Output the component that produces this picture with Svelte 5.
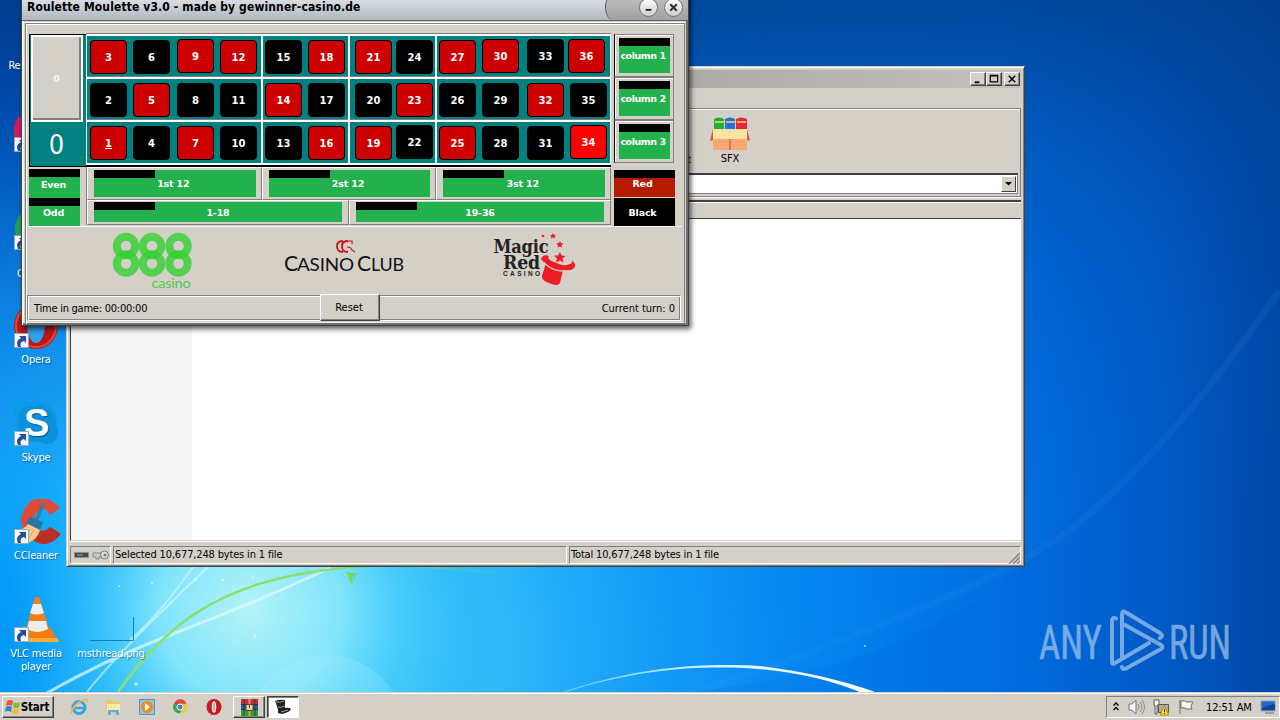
<script>
  // Board rows, top to bottom
  const rows = [
    [3, 6, 9, 12, 15, 18, 21, 24, 27, 30, 33, 36],
    [2, 5, 8, 11, 14, 17, 20, 23, 26, 29, 32, 35],
    [1, 4, 7, 10, 13, 16, 19, 22, 25, 28, 31, 34]
  ];
  const reds = [1, 3, 5, 7, 9, 12, 14, 16, 18, 19, 21, 23, 25, 27, 30, 32, 34, 36];
  const raised = [9, 22, 30, 33, 36, 34];

  const icons = [
    { kind: 'bin', label: 'Recycle Bin', top: 9 },
    { kind: 'reader', label: '', top: 107 },
    { kind: 'chrome', label: 'Chrome', top: 205, lower: true },
    { kind: 'opera', label: 'Opera', top: 303 },
    { kind: 'skype', label: 'Skype', top: 401 },
    { kind: 'ccleaner', label: 'CCleaner', top: 499 },
    { kind: 'vlc', label: 'VLC media player', top: 597 }
  ];

  let selected = $state(34);
</script>

<div class="desktop">
  <svg class="wallpaper" viewBox="0 0 1280 720" preserveAspectRatio="none">
    <defs>
      <linearGradient id="sky" x1="0" y1="0" x2="0" y2="1">
        <stop offset="0" stop-color="#0040a8" />
        <stop offset=".22" stop-color="#0050bc" />
        <stop offset=".5" stop-color="#0786e2" />
        <stop offset=".8" stop-color="#00a2fa" />
        <stop offset="1" stop-color="#0098f4" />
      </linearGradient>
      <linearGradient id="right" x1="0" y1="0" x2="1" y2="0">
        <stop offset=".3" stop-color="#0078ea" stop-opacity="0" />
        <stop offset=".52" stop-color="#0080ee" stop-opacity=".75" />
        <stop offset=".78" stop-color="#0070e4" />
        <stop offset=".9" stop-color="#005cc8" />
        <stop offset="1" stop-color="#0046a0" />
      </linearGradient>
      <linearGradient id="topdark" x1="0" y1="0" x2="0" y2="1">
        <stop offset="0" stop-color="#003c88" stop-opacity=".75" />
        <stop offset=".5" stop-color="#0048a4" stop-opacity=".25" />
        <stop offset="1" stop-color="#0060d0" stop-opacity="0" />
      </linearGradient>
      <radialGradient id="halo" gradientUnits="userSpaceOnUse" cx="300" cy="660" r="680">
        <stop offset="0" stop-color="#50d4fa" />
        <stop offset=".3" stop-color="#38c0fa" stop-opacity=".85" />
        <stop offset=".55" stop-color="#20a8fc" stop-opacity=".55" />
        <stop offset=".8" stop-color="#0c90f8" stop-opacity=".25" />
        <stop offset="1" stop-color="#0080f0" stop-opacity="0" />
      </radialGradient>
      <radialGradient id="glow" gradientUnits="userSpaceOnUse" cx="250" cy="610" r="260">
        <stop offset="0" stop-color="#b4f4f8" />
        <stop offset=".35" stop-color="#88e8fb" stop-opacity=".9" />
        <stop offset=".6" stop-color="#4cd0fc" stop-opacity=".5" />
        <stop offset="1" stop-color="#10a0f8" stop-opacity="0" />
      </radialGradient>
      <radialGradient id="edge" gradientUnits="userSpaceOnUse" cx="-40" cy="640" r="230">
        <stop offset="0" stop-color="#0094f6" />
        <stop offset=".3" stop-color="#0098f8" stop-opacity=".9" />
        <stop offset="1" stop-color="#00a8ff" stop-opacity="0" />
      </radialGradient>
      <linearGradient id="swoosh" x1="0" x2="1">
        <stop offset="0" stop-color="#9ce4ff" stop-opacity=".6" />
        <stop offset=".5" stop-color="#d8f6ff" />
        <stop offset="1" stop-color="#fff" />
      </linearGradient>
      <linearGradient id="stem" x1="0" x2="1">
        <stop offset="0" stop-color="#8be070" />
        <stop offset=".55" stop-color="#8bdc68" />
        <stop offset="1" stop-color="#60c8b0" stop-opacity="0" />
      </linearGradient>
    </defs>
    <rect width="1280" height="720" fill="url(#sky)" />
    <rect width="1280" height="720" fill="url(#right)" />
    <rect width="1280" height="500" fill="url(#topdark)" />
    <rect width="1280" height="720" fill="url(#halo)" />
    <rect width="1280" height="720" fill="url(#edge)" />
    <rect width="1280" height="720" fill="url(#glow)" />
    <circle cx="326" cy="735" r="80" fill="#c0f6ff" opacity=".2" />
    <path d="M690 692Q900 670 1025 565L1280 310V720H690Z" fill="#005ed0" opacity=".12" />
    <path d="M690 694Q850 640 940 600T1070 530Q1170 450 1280 290" fill="none" stroke="#4aa0f0" stroke-width="7" opacity=".1" />
    <path d="M560 693C650 662 720 664 760 666Q826 674 878 693H862Q812 672 745 668C700 666 640 668 562 693Z" fill="url(#swoosh)" />
    <path d="M45 694Q105 660 170 635Q250 605 330 568" fill="none" stroke="#d8faff" stroke-width="3" opacity=".75" />
    <path d="M87 692Q120 650 208 567M130 640Q160 614 193 567" fill="none" stroke="#d8faff" stroke-width="2" opacity=".6" />
    <path d="M118 692C165 626 215 588 306 573S440 570 520 574" fill="none" stroke="url(#stem)" stroke-width="2.4" />
    <path d="M345 571q5 2 14 3l-5 1 3 5-5-4 1 7-3 0-2-8z" fill="#78d860" />
    <g fill="#d8fbff" opacity=".75">
      <circle cx="136" cy="684" r="1.8" /><circle cx="223" cy="580" r="1.3" />
      <circle cx="119" cy="586" r="1" /><circle cx="152" cy="583" r="1" />
      <circle cx="255" cy="636" r="1.6" /><circle cx="196" cy="580" r="1.4" />
      <circle cx="253" cy="577" r="1" /><circle cx="865" cy="646" r="1" />
    </g>
  </svg>

  {#each icons as icon}
    <div class="desk-icon" class:lower={icon.lower} style="top: {icon.top}px">
      <svg width="48" height="48" viewBox="0 0 48 48">
        {#if icon.kind === 'bin'}
          <path d="M12 6h26l-4 38H16z" fill="#9ec4dc" opacity=".6" />
        {:else if icon.kind === 'reader'}
          <rect x="2" y="7" width="42" height="38" rx="14" fill="#d2185c" />
        {:else if icon.kind === 'chrome'}
          <circle cx="25" cy="24" r="22" fill="#20a052" />
        {:else if icon.kind === 'opera'}
          <ellipse cx="24" cy="23" rx="22" ry="23" fill="#bc1717" />
          <ellipse cx="24" cy="23" rx="20" ry="21" fill="none" stroke="#e5473b" stroke-width="2" />
          <ellipse cx="24" cy="22" rx="9" ry="18" fill="#2aa1ea" />
        {:else if icon.kind === 'skype'}
          <path d="M13 0C1 0-1 12 4 19C1 32 14 44 27 40C40 46 49 34 44 23C48 8 33-1 22 3Q18 0 13 0z" fill="#079ce4" />
          <path d="M6 15Q12 1 30 5Q43 10 44 23Q49 37 40 42Q32 45 27 40Q12 42 6 30z" fill="#0a90dc" />
          <text x="24.500" y="35" text-anchor="middle" font-family="Liberation Sans" font-size="38" font-weight="bold" fill="#fff">S</text>
        {:else if icon.kind === 'ccleaner'}
          <path d="M48 9Q31-9 16 5Q2 22 17 38Q32 53 49 35L38 28Q30 36 24 27Q18 13 31 10Q35 10 38 16z" fill="#e24935" />
          <path d="M49 35Q35 52 20 40L26 30Q31 35 38 28z" fill="#b82f27" />
          <path d="M30 3l3 1-8 21-4-1z" fill="#397bab" />
          <path d="M18 18l13 5-3 8-14-7z" fill="#2478a5" />
          <path d="M16 25l12 6Q26 40 16 44L2 31Q11 32 16 25z" fill="#f4c98d" />
          <path d="M13 28l-6 6M18 30l-5 10M22 31l-5 8" stroke="#d8a868" />
        {:else if icon.kind === 'vlc'}
          <path d="M13 31h26l7 14H8z" fill="#f47a12" />
          <path d="M23 0h4L37 32Q26 40 14 32z" fill="#f77d1a" />
          <path d="M21 7h8l3 9q-7 3-14 0zM17 24h17l2 8q-11 6-21 0z" fill="#eee" />
          <path d="M9 41h36l2 4H7z" fill="#ffac32" />
        {/if}
      </svg>
      {#if icon.kind !== 'bin'}
        <svg class="shortcut" viewBox="0 0 15 15">
          <path d="M.5.5h14v14H.5z" fill="#f4f6fa" stroke="#9ab" />
          <path d="M4 14Q1 8 7 5L5 3h7v7l-2-2Q5 9 7 14z" fill="#214f9a" />
        </svg>
      {/if}
      <span>{icon.label}</span>
    </div>
  {/each}

  <div class="desk-file">
    <svg width="48" height="26" viewBox="0 0 48 26"><path d="M3 24.500h43.500V1" fill="none" stroke="#187eb0" /></svg>
    <span>msthread.png</span>
  </div>

  <!-- Archive manager behind the game -->
  <div class="archive">
    <div class="archive-title">
      <button class="cap"><svg viewBox="0 0 13 11"><path d="M3 9h5" stroke="#000" stroke-width="2" /></svg></button>
      <button class="cap"><svg viewBox="0 0 13 11"><path d="M2.500 1.500h8v7h-8zM2 2h9" fill="none" stroke="#000" stroke-width="1.300" /></svg></button>
      <button class="cap close"><svg viewBox="0 0 13 11"><path d="M3 2l7 7M10 2l-7 7" stroke="#000" stroke-width="1.600" /></svg></button>
    </div>
    <div class="archive-menu"></div>
    <div class="archive-tools">
      <div class="tool-row">
        <span class="tool-cut">Protect</span>
        <div class="tool">
          <svg width="40" height="34" viewBox="0 0 40 34">
            <path d="M4 2Q9-1 14 2v12H4z" fill="#1fae36" /><path d="M15 2Q20-1 25 2v12H15z" fill="#2a6fe0" /><path d="M26 2Q31-1 37 2v12H26z" fill="#e8283a" />
            <path d="M5 5h9M16 5h9M27 5h9" stroke="#f4e05a" stroke-width="1.600" />
            <path d="M3 13h34v20H3z" fill="#f6a873" />
            <path d="M3 12h34l2 10H1z" fill="#fbe3a2" />
            <path d="M3 12L0 24l3-1M37 12l3 12-3-1" fill="#b5633d" /><path d="M20 22v11" stroke="#a35330" />
          </svg>
          <span>SFX</span>
        </div>
      </div>
      <div class="address"><button class="drop"><svg viewBox="0 0 8 4"><path d="M0 0h8L4 4z" /></svg></button></div>
    </div>
    <div class="list-head"></div>
    <div class="list"><div class="tree"></div></div>
    <div class="archive-status">
      <div class="stat marks">
        <svg width="36" height="12" viewBox="0 0 36 12">
          <path d="M.5 3.500h14v5H.5z" fill="#45494c" stroke="#8b9093" /><path d="M3 6h6" stroke="#8ab5a5" />
          <path d="M19 4h9v4h-3v2h-3V8h-3z" fill="#c9c9c9" stroke="#888" /><circle cx="30.500" cy="6" r="4" fill="#ddd" stroke="#777" /><circle cx="31" cy="6" r="1.500" fill="#777" />
        </svg>
      </div>
      <div class="stat">Selected 10,677,248 bytes in 1 file</div>
      <div class="stat last">Total 10,677,248 bytes in 1 file
        <svg class="grip" viewBox="0 0 12 12"><path d="M1 12L12 1M5 12l7-7M9 12l3-3" stroke="#808080" stroke-width="1.400" /></svg>
      </div>
    </div>
  </div>

  <!-- Game window -->
  <div class="game">
    <div class="game-title">
      <span>Roulette Moulette v3.0 - made by gewinner-casino.de</span>
      <div class="game-caps">
        <button><svg viewBox="0 0 18 18"><path d="M6 11.500h6" stroke="#222" stroke-width="2" /></svg></button>
        <button><svg viewBox="0 0 18 18"><path d="M5.500 5.500l7 7M12.500 5.500l-7 7" stroke="#333" stroke-width="2.200" /></svg></button>
      </div>
    </div>
    <div class="client">
      <div class="table">
        <div class="zero">
          <button>0</button>
          <strong>0</strong>
        </div>
        <div class="board">
          {#each rows as row}
            <div class="row">
              {#each row as n}
                <button
                  class="chip"
                  class:red={reds.includes(n)}
                  class:up={raised.includes(n)}
                  class:back={n === 36}
                  class:hot={n === selected}
                  class:lined={n === 1}
                  onclick={() => (selected = n)}>{n}</button>
              {/each}
            </div>
          {/each}
        </div>
        <div class="columns">
          {#each [1, 2, 3] as c}
            <div class="column-cell"><button class="bet">column {c}</button></div>
          {/each}
        </div>
        <div class="parity">
          <button class="bet">Even</button>
          <button class="bet">Odd</button>
        </div>
        <div class="outside">
          <div class="dozens">
            {#each [1, 2, 3] as d}
              <div><button class="bet">{d}st 12</button></div>
            {/each}
          </div>
          <div class="halves">
            <div><button class="bet">1-18</button></div>
            <div><button class="bet">19-36</button></div>
          </div>
        </div>
        <div class="colours">
          <button class="bet crimson">Red</button>
          <button class="bet black">Black</button>
        </div>
      </div>
      <div class="logos">
        <svg width="656" height="66" viewBox="28 227 656 66">
          <g fill="none" stroke="#30d030" stroke-opacity=".78" stroke-width="8">
            {#each [126, 152, 178.500] as x}
              <circle cx={x} cy="246" r="9.200" /><circle cx={x} cy="263.500" r="9.200" />
            {/each}
          </g>
          <text x="151.500" y="287.500" font-family="Lato" font-size="13" fill="#50c850" textLength="39" lengthAdjust="spacingAndGlyphs">casino</text>
          <g fill="none" stroke="#c5161d">
            <path d="M343 241q-6 0-6 5.500t6 5.500M348 241q-6 0-6 5.500t6 5.500" stroke-width="1.800" />
            <path d="M345 241h7v3M347 247q4 0 5 3l3 2" stroke-width="1.200" />
          </g>
          <g font-family="Lato" fill="#111">
            <text x="284" y="271" font-size="22" textLength="14" lengthAdjust="spacingAndGlyphs">C</text>
            <text x="297" y="271" font-size="18" textLength="57" lengthAdjust="spacingAndGlyphs">ASINO</text>
            <text x="357" y="271" font-size="22" textLength="14" lengthAdjust="spacingAndGlyphs">C</text>
            <text x="371" y="271" font-size="18" textLength="33" lengthAdjust="spacingAndGlyphs">LUB</text>
          </g>
          <g font-family="DejaVu Serif" font-weight="bold" fill="#222">
            <text x="493.500" y="253" font-size="18" textLength="55" lengthAdjust="spacingAndGlyphs">Magic</text>
            <text x="503" y="268.500" font-size="18" textLength="37" lengthAdjust="spacingAndGlyphs">Red</text>
          </g>
          <text x="503" y="275.500" font-family="Liberation Sans" font-size="6.500" font-weight="bold" fill="#222" textLength="37">CASINO</text>
          <g fill="#ee1c25">
            <path d="M542 257q2-3 7-1q-3 3 5 6q10 5 16 2q3-1 2-4q6 6 1 9q-3 2-10 1l-3 13q-2 4-11 0q-8-3-7-7l4-13q-7-3-4-6z" />
            <path d="M560 252l1.500 3.500 4 .5-3 2.500 1 4-3.500-2-4 2 1-4-3-3h4z" />
            <path d="M560 241l1 2 2.500.5-2 1.500.5 2.500-2-1-2.500 1 .5-2.500-2-1.500 3-.500zM553 233l1 2h2l-1.500 1.500.5 2-2-1-2 1 .5-2-1.500-1.500h2z" />
            <circle cx="543" cy="236" r="1.300" /><circle cx="536.500" cy="240.500" r=".8" />
          </g>
          <path d="M545 264q10 8 20 7" fill="none" stroke="#d4d0c8" stroke-width="1.300" />
        </svg>
      </div>
      <div class="game-status">
        <span class="timer">Time in game: 00:00:00</span>
        <button class="reset">Reset</button>
        <span class="turn">Current turn: 0</span>
      </div>
    </div>
  </div>

  <svg class="watermark" width="200" height="72" viewBox="0 0 200 72">
    <g font-family="Roboto" font-size="49" fill="#a8c8ec" stroke="#a8c8ec" stroke-width=".6">
      <text transform="translate(1 50) scale(.66 1)" textLength="95" lengthAdjust="spacingAndGlyphs">ANY</text>
      <text transform="translate(131 50) scale(.66 1)" textLength="94" lengthAdjust="spacingAndGlyphs">RUN</text>
    </g>
    <g fill="none" stroke="#a8c8ec" stroke-width="4" stroke-linejoin="round" stroke-linecap="round">
      <path d="M78 9.500Q74 8 74 12V53Q74 56 77 54L111 34" />
      <path d="M84 48V5Q84 1 88 3.500L122 24Q126 27 122 29" />
      <path d="M87 16L123 36Q126 38 123 40L88 59.500Q84 61 84 58" />
    </g>
  </svg>

  <div class="taskbar">
    <button class="start">
      <svg width="16" height="16" viewBox="0 0 16 16"><path d="M2 2q3-2 6 0L7 7Q4 5 1 7z" fill="#ed562b" /><path d="M9 3q3 2 6 0l-1 5q-3 2-6 0z" fill="#76b944" /><path d="M1 8q3-2 6 0l-1 5q-3-2-6 0z" fill="#3189cb" /><path d="M8 9q3 2 6 0l-1 5q-3 2-6 0z" fill="#f7bd28" /></svg>
      Start
    </button>
    <div class="quick">
      <svg viewBox="0 0 18 18"><circle cx="9" cy="9.500" r="6" fill="none" stroke="#36a5e2" stroke-width="3" /><path d="M5 10h9" stroke="#36a5e2" stroke-width="2.500" /><path d="M1 16Q2 8 11 3q8-4 6 2" fill="none" stroke="#e6bd38" stroke-width="1.500" /></svg>
      <svg viewBox="0 0 18 18"><path d="M2 2h6l1 2h7v11H2z" fill="#eacb69" /><path d="M3 6h13v8H3z" fill="#f9e9a9" /><path d="M4 17v-5h11v5h-3v-3H7v3z" fill="#5daed8" /></svg>
      <svg viewBox="0 0 18 18"><path d="M1.500 1.500h15v15h-15z" fill="#8fc5e5" stroke="#5292bd" /><circle cx="9" cy="9" r="6" fill="#f18a18" /><path d="M7 5l5 4-5 4z" fill="#fff" /></svg>
      <svg viewBox="0 0 18 18"><path d="M3 6A6.500 6.500 0 0 1 15.500 6L9 9z" fill="#df4638" /><path d="M3 5.500A6.500 6.500 0 0 0 9 15.500l3-6-4-1z" fill="#37a853" /><path d="M15.500 6A6.500 6.500 0 0 1 9 15.500l3-7-2-3z" fill="#f5c431" /><circle cx="9" cy="9" r="3" fill="#3e80dd" stroke="#fff" /></svg>
      <svg viewBox="0 0 18 18"><ellipse cx="9" cy="9" rx="7.500" ry="8" fill="#c51a21" /><ellipse cx="9" cy="9" rx="2.300" ry="6" fill="#f2e8e4" /><path d="M9 5v8" stroke="#a01018" stroke-width=".6" /></svg>
    </div>
    <button class="task">
      <svg width="17" height="17" viewBox="0 0 17 17"><path d="M0 0h17v5H0z" fill="#c52c44" /><path d="M0 6h17v4H0z" fill="#3651b4" /><path d="M0 11h17v6H0z" fill="#339a3c" /><path d="M0 5.500h17M0 10.500h17" stroke="#332" /><path d="M3 0v17M14 0v17" stroke="#332" stroke-width=".8" /><path d="M7.500 0h2v17h-2z" fill="#cfa54d" /><path d="M5 5.500h7v6H5z" fill="#e8d8a0" stroke="#543" /><path d="M8.500 6v3" stroke="#543" /></svg>
    </button>
    <button class="task active">
      <svg width="18" height="16" viewBox="0 0 18 16"><path d="M1 2Q6 0 11 1l0 8q4-1 6 1-1 3-9 5l-4-1 0-3Q3 6 1 2z" fill="#202024" /><path d="M4 8q3 1 7-1M2 3q4 1 8-1M7 13l7-2" fill="none" stroke="#bbb" stroke-width=".8" /></svg>
    </button>
    <div class="tray">
      <svg width="8" height="12" viewBox="0 0 8 12"><path d="M1.500 4.500l2.500-2.500 2.500 2.500M1.500 9L4 6.500 6.500 9" fill="none" stroke="#000" stroke-width="1.300" /></svg>
      <svg width="17" height="16" viewBox="0 0 17 16"><path d="M1 5h3l4-4v14l-4-4H1z" fill="#f4f4f4" stroke="#777" /><path d="M10 5q2 3 0 6M12 3q4 5 0 10M14 1q5 7 0 14" fill="none" stroke="#888" /></svg>
      <svg width="17" height="17" viewBox="0 0 17 17"><path d="M5.500 5.500h10v8h-10z" fill="#aaa" stroke="#555" /><path d="M1 1h5v5H4v9H2V6H1z" fill="#fff" stroke="#555" /><path d="M11 7l5 9H7z" fill="#ffdb23" stroke="#b88a12" /><path d="M11.500 10v3M11.500 14v1" stroke="#332" /></svg>
      <svg width="17" height="16" viewBox="0 0 17 16"><path d="M2 1v14M3 2q4-1 6 1h6l-2 4 1 3H9Q6 8 3 9z" fill="#f8f8f8" stroke="#666" /></svg>
      <span>12:51 AM</span>
      <svg width="16" height="14" viewBox="0 0 16 14"><path d="M1 1h14v10H1z" fill="#2767c4" stroke="#8ba0b8" /><path d="M2 8q6-3 13-4v6H2z" fill="#12449a" /><path d="M5 13h9" stroke="#607080" /></svg>
    </div>
  </div>
</div>

<style>
  :global(body) {
    overflow: hidden;
  }

  .desktop {
    position: relative;
    width: 1280px;
    height: 720px;
    overflow: hidden;
    font-family: "DejaVu Sans Condensed", "DejaVu Sans", sans-serif;
    font-stretch: condensed;
    font-size: 11px;
    letter-spacing: -0.16px;
    color: #000;
  }

  .desktop * {
    box-sizing: border-box;
  }

  svg {
    display: block;
    flex: none;
  }

  button {
    font: inherit;
    letter-spacing: inherit;
    color: inherit;
    padding: 0;
    margin: 0;
    border: 0;
    cursor: pointer;
  }

  .wallpaper {
    position: absolute;
    inset: 0;
    width: 1280px;
    height: 720px;
  }

  /* Desktop icons */
  .desk-icon,
  .desk-file {
    position: absolute;
    left: 0;
    width: 72px;
    display: flex;
    flex-direction: column;
    align-items: center;
    color: #fff;
    text-align: center;
    line-height: 13px;
    text-shadow: 1px 1px 1px rgba(0, 30, 80, 0.5);
  }

  .desk-icon span {
    margin-top: 2px;
    padding: 0 6px;
  }

  .desk-icon.lower span {
    margin-top: 14px;
  }

  .desk-icon .shortcut {
    position: absolute;
    left: 14px;
    top: 30px;
    width: 15px;
    height: 15px;
  }

  .desk-file {
    left: 75px;
    top: 616px;
  }

  .desk-file span {
    margin-top: 5px;
  }

  /* Archive window */
  .archive {
    position: absolute;
    left: 66px;
    top: 66px;
    width: 959px;
    height: 501px;
    padding: 3px 3px 2px;
    display: flex;
    flex-direction: column;
    background: #d4d0c8;
    border: 1px solid;
    border-color: #d4d0c8 #404040 #404040 #d4d0c8;
    box-shadow: inset 1px 1px #fff, inset -1px -1px #808080;
  }

  .archive-title {
    height: 18px;
    display: flex;
    align-items: center;
    justify-content: flex-end;
    padding-right: 1px;
    background: linear-gradient(90deg, #808080, #c4c2be);
  }

  .cap {
    width: 16px;
    height: 14px;
    padding: 1px;
    background: #d4d0c8;
    border: 1px solid;
    border-color: #fff #404040 #404040 #fff;
    box-shadow: inset -1px -1px #808080;
  }

  .cap.close {
    margin-left: 2px;
  }

  .archive-menu {
    height: 20px;
  }

  .archive-tools {
    height: 89px;
    border: 1px solid #808080;
    box-shadow: inset 1px 1px #fff, 0 1px #fff;
    display: flex;
    flex-direction: column;
    padding: 8px 2px 2px;
  }

  .tool-row {
    height: 57px;
    display: flex;
    padding-left: 581px;
  }

  .tool-cut {
    width: 37px;
    padding-top: 36px;
    text-align: right;
  }

  .tool {
    width: 78px;
    display: flex;
    flex-direction: column;
    align-items: center;
    line-height: 16px;
  }

  .address {
    height: 21px;
    display: flex;
    justify-content: flex-end;
    background: #fff;
    border: 1px solid #808080;
    border-top: 2px solid #404040;
    padding: 1px;
  }

  .drop {
    width: 15px;
    background: #d4d0c8;
    border: 1px solid;
    border-color: #fff #404040 #404040 #fff;
    padding: 0 3px;
  }

  .list-head {
    height: 19px;
    margin-top: 3px;
    border-top: 2px solid #404040;
    border-bottom: 1px solid #404040;
    box-shadow: inset 0 1px #fff;
  }

  .list {
    height: 323px;
    background: #fff;
    border-left: 1px solid #404040;
    border-bottom: 1px solid #d4d0c8;
  }

  .tree {
    width: 121px;
    height: 100%;
    background: #f4f4f4;
  }

  .archive-status {
    flex: 1;
    display: flex;
    gap: 2px;
    padding-top: 4px;
    border-top: 1px solid #fff;
  }

  .stat {
    width: 454px;
    height: 18px;
    line-height: 16px;
    padding-left: 1px;
    border: 1px solid;
    border-color: #808080 #fff #fff #808080;
  }

  .stat.marks {
    width: 41px;
    padding: 2px 3px;
  }

  .stat.last {
    flex: 1;
    display: flex;
    justify-content: space-between;
  }

  .grip {
    width: 12px;
    height: 12px;
    margin-top: 5px;
  }

  /* Game window */
  .game {
    position: absolute;
    left: 21px;
    top: -6px;
    width: 668px;
    height: 332px;
    background: #d4d0c8;
    border: 1px solid #404040;
    border-top: 0;
    box-shadow: inset 1px 0 #fff, inset -2px -2px #707070, inset 2px -3px #eee, 2px 3px 5px rgba(0, 0, 0, 0.65);
    padding: 0 3px 4px;
  }

  .game-title {
    height: 27px;
    margin: 0 -3px;
    display: flex;
    justify-content: space-between;
    background: linear-gradient(#e2e6e9, #c7ced5 55%, #aeb7c0);
    border-bottom: 1px solid #606468;
  }

  .game-title span {
    padding: 6px 0 0 5px;
    font-size: 12px;
    line-height: 14px;
    font-weight: bold;
    letter-spacing: 0.12px;
  }

  .game-caps {
    width: 83px;
    display: flex;
    justify-content: flex-end;
    gap: 6px;
    padding: 4px 5px 0 0;
    background: linear-gradient(#c2c2c2, #a1a1a1);
    border-left: 1px solid #555;
    border-radius: 16px 0 0 16px / 26px 0 0 26px;
  }

  .game-caps button {
    width: 19px;
    height: 19px;
    border: 1px solid #777;
    border-radius: 50%;
    background: linear-gradient(#fff, #ccc);
  }

  .client {
    border: 1px solid #808080;
    border-bottom: 0;
    margin-top: 2px;
    height: 301px;
    padding: 0 2px;
    box-shadow: 0 -1px #fff, inset 1px 1px #fff;
  }

  .table {
    height: 203px;
    padding: 10px 0 0 1px;
    display: grid;
    grid-template-columns: 57px 528px 61px;
    grid-template-rows: 133px 59px;
    border-bottom: 1px solid #fff;
  }

  .zero {
    display: flex;
    flex-direction: column;
    align-items: center;
    background: #008080;
    border: 1px solid #000;
    border-width: 1px 0 1px 1px;
    padding: 0 3px 0 0;
    color: #fff;
  }

  .zero button {
    width: 52px;
    height: 87px;
    flex: none;
    border: 2px solid #fff;
    background: #d4d0c8;
    box-shadow: inset -2px -2px #808080;
    font: bold 9.5px "DejaVu Sans", sans-serif;
    color: #f5f3ee;
  }

  .zero strong {
    font-size: 27px;
    font-weight: normal;
    line-height: 46px;
  }

  .board {
    width: 525px;
    height: 133px;
    border-bottom: 2px solid #000;
    background: #008080;
    position: relative;
  }

  /* White dividers between the chip groups */
  .board::after {
    content: "";
    position: absolute;
    inset: 0;
    pointer-events: none;
    border: 1px solid #fff;
    border-width: 0 1px 0 1px;
    background:
      linear-gradient(#fff, #fff) 174px 0 / 2px 100% no-repeat,
      linear-gradient(#fff, #fff) 261px 0 / 2px 100% no-repeat,
      linear-gradient(#fff, #fff) 348px 0 / 2px 100% no-repeat;
  }

  .row {
    height: 43px;
    padding: 4px 0 0 4px;
    display: grid;
    grid-template-columns: 43px 44px 43px 45px 43px 47px 41px 43px 43px 45px 43px 37px;
    border-top: 2px solid #fff;
    box-shadow: 0 -1px #808080;
  }

  .row:last-child {
    height: 45px;
    border-bottom: 2px solid #fff;
  }

  .chip {
    width: 37px;
    height: 34px;
    border: 1px solid #000;
    border-radius: 4px;
    background: #000;
    color: #fff;
    font: bold 10px "DejaVu Sans", sans-serif;
    letter-spacing: 0;
  }

  .chip.red {
    background: #cc0000;
  }

  .chip.hot {
    background: #ff0000;
  }

  .chip.up {
    margin-top: -1px;
  }

  .chip.back {
    margin-left: -2px;
  }

  .chip.lined {
    text-decoration: underline;
  }

  .columns {
    display: flex;
    flex-direction: column;
  }

  .column-cell {
    height: 43px;
    width: 60px;
    padding: 3px 3px 3px 4px;
    border: 1px solid #808080;
    border-left: 1px solid #000;
    box-shadow: inset 1px 1px #fff;
  }

  .bet {
    display: block;
    width: 100%;
    height: 100%;
    color: #fff;
    font: bold 9.5px "DejaVu Sans", sans-serif;
    background: linear-gradient(#000, #000) 0 0 / 61px 8px no-repeat #22b14c;
    white-space: nowrap;
  }

  .column-cell .bet {
    letter-spacing: -0.45px;
    padding-right: 3px;
  }

  .parity,
  .colours {
    display: flex;
    flex-direction: column;
    padding-top: 2px;
  }

  .parity .bet {
    width: 51px;
    height: 29px;
    padding: 1px 2px 0 0;
  }

  .parity .bet:last-child {
    height: 28px;
  }

  .colours {
    padding-top: 3px;
  }

  .colours .bet {
    height: 28px;
    padding-right: 4px;
  }

  .colours .crimson {
    background-color: #b51b00;
    border-bottom: 1px solid #d4d0c8;
  }

  .colours .black {
    background: #000;
  }

  .outside {
    width: 525px;
  }

  .dozens,
  .halves {
    display: flex;
    height: 33px;
    border-left: 1px solid #808080;
  }

  .halves {
    height: 25px;
  }

  .dozens div,
  .halves div {
    flex: 1;
    padding: 2px 5px 2px 6px;
    border: 1px solid;
    border-color: #fff #808080 #808080 #fff;
  }

  .dozens .bet {
    padding-right: 3px;
  }

  .halves div {
    padding: 1px 6px 2px 6px;
  }

  .logos {
    height: 68px;
  }

  .game-status {
    height: 26px;
    margin: 0 1px 0 -1px;
    display: flex;
    align-items: center;
    justify-content: space-between;
    padding: 0 5px 0 6px;
    border: 1px solid;
    border-color: #808080 #fff #fff #808080;
    box-shadow: inset 1px 1px #fff, inset -1px -1px #808080;
  }

  .timer {
    width: 286px;
    letter-spacing: -0.24px;
  }

  .turn {
    flex: 1;
    text-align: right;
    letter-spacing: 0;
  }

  .reset {
    width: 60px;
    height: 27px;
    margin-top: -2px;
    padding-right: 2px;
    background: #d4d0c8;
    border: 1px solid;
    border-color: #fff #404040 #404040 #fff;
    box-shadow: inset -1px -1px #808080;
    letter-spacing: 0;
  }

  .watermark {
    position: absolute;
    left: 1038px;
    top: 609px;
    opacity: 0.7;
    letter-spacing: 0;
  }

  /* Taskbar */
  .taskbar {
    position: absolute;
    left: 0;
    bottom: 0;
    width: 1280px;
    height: 28px;
    display: flex;
    align-items: center;
    padding: 1px 0 0 2px;
    background: #d4d0c8;
    border-top: 1px solid #d4d0c8;
    box-shadow: inset 0 1px #fff;
  }

  .start,
  .task {
    height: 22px;
    border: 1px solid;
    border-color: #fff #404040 #404040 #fff;
    box-shadow: inset -1px -1px #808080;
    background: #d4d0c8;
    display: flex;
    align-items: center;
    justify-content: center;
  }

  .start {
    width: 52px;
    padding-right: 2px;
    font-weight: bold;
    font-size: 11.5px;
  }

  .quick {
    display: flex;
    gap: 15.8px;
    margin: 0 10px 0 16px;
  }

  .quick svg {
    width: 18px;
    height: 18px;
  }

  .task {
    width: 32px;
    margin-right: 2px;
  }

  .task.active {
    background: #fff;
    border-color: #404040 #fff #fff #404040;
    box-shadow: inset 1px 1px #808080;
  }

  .tray {
    width: 174px;
    height: 22px;
    margin-left: auto;
    padding: 0 4px 0 5px;
    display: flex;
    align-items: center;
    gap: 8px;
    border: 1px solid;
    border-color: #808080 #fff #fff #808080;
  }

  .tray span {
    margin-left: 3px;
    width: 47px;
    white-space: nowrap;
  }
</style>
